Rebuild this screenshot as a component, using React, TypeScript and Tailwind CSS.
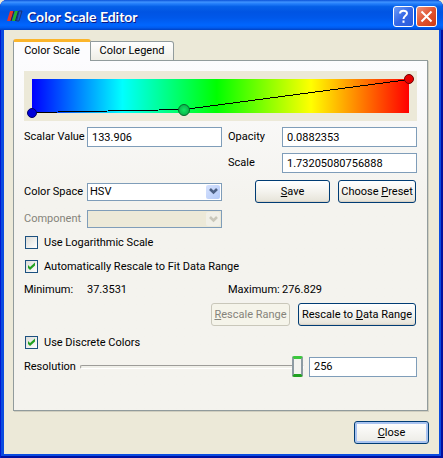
import { useState } from "react";
import type { ReactNode } from "react";

const textBox =
  "h-5 w-full min-w-0 border border-[#7f9db9] bg-white pl-[4px] pr-1 outline-none";
const pushButton =
  "h-[23px] rounded-[3px] border border-[#003c74] bg-linear-to-b from-white via-[#f4f3ee] to-[#e6e3d8] shadow-[inset_0_-1px_1px_#d6d0c5] disabled:border-[#c9c7ba] disabled:bg-none disabled:bg-[#f5f4ea] disabled:text-[#85837a] disabled:shadow-none";

function Chevron({ color }: { color: string }) {
  return (
    <svg width="9" height="7" viewBox="0 0 9 7" fill="none">
      <path d="M1 1 L4.5 4.5 L8 1" stroke={color} strokeWidth="2.6" />
    </svg>
  );
}

function Check({ id, checked, onChange, children }: {
  id: string;
  checked: boolean;
  onChange: (value: boolean) => void;
  children: ReactNode;
}) {
  return (
    <div className="flex h-6 items-center gap-1.5 pl-px">
      <span className="relative flex">
        <input
          id={id}
          type="checkbox"
          checked={checked}
          onChange={(e) => onChange(e.target.checked)}
          className="size-[13px] appearance-none border border-[#1c5180] bg-linear-to-br from-[#dcdcd7] to-white"
        />
        {checked && (
          <svg className="pointer-events-none absolute inset-0" width="13" height="13" viewBox="0 0 13 13">
            <path d="M3 5 L5 7 L10 2.5 V5.5 L5 10 L3 8 Z" fill="#21a121" />
          </svg>
        )}
      </span>
      <label htmlFor={id} className="pt-px">{children}</label>
    </div>
  );
}

function TitleBar() {
  return (
    <header className="flex h-[30px] items-center rounded-t-[7px] bg-[linear-gradient(to_bottom,#0a52d8_0%,#3f93ff_7%,#2580fb_12%,#0560e8_22%,#0054e3_40%,#0058ea_60%,#0066ff_84%,#005cf0_92%,#0042c4_100%)] pl-[7px] pr-1.5">
      <svg className="mt-0.5" width="16" height="12" viewBox="0 0 16 12">
        <path d="M3 1 H6.5 L3.5 11 H0 Z" fill="#e8352c" />
        <path d="M6.5 1 H7.5 L4.5 11 H3.5 Z" fill="#3a1530" />
        <path d="M8 1 H11 L8 11 H5 Z" fill="#27b327" />
        <path d="M11 1 H12 L9 11 H8 Z" fill="#12304a" />
        <path d="M12 1 H15 L12 11 H9.5 Z" fill="#1f55c8" stroke="#1a2f66" strokeWidth="0.8" />
      </svg>
      <h1 className="ml-1 mt-1 flex-1 font-['Lato',sans-serif] text-[14px] leading-5 font-bold text-white [text-shadow:1px_1px_#0a1883]">
        Color Scale Editor
      </h1>
      <div className="mt-[3px] flex gap-0.5">
        <button type="button" aria-label="Help" className="flex size-[21px] items-center justify-center rounded-[3px] border border-white bg-linear-to-br from-[#6f9bf5] via-[#3567e6] to-[#2a5cdb]">
          <svg width="11" height="15" viewBox="0 0 11 15" fill="none" stroke="white" strokeWidth="2">
            <path d="M2 4.5 C2 0.8 9 0.8 9 4.3 C9 7 5.5 6.5 5.5 10" />
            <path d="M5.5 11.5 V13.8" />
          </svg>
        </button>
        <button type="button" aria-label="Close window" className="flex size-[21px] items-center justify-center rounded-[3px] border border-white bg-linear-to-br from-[#ee9078] via-[#e0532f] to-[#cf3a10]">
          <svg width="13" height="13" viewBox="0 0 13 13" stroke="white" strokeWidth="2">
            <path d="M1.5 1.5 L11.5 11.5 M11.5 1.5 L1.5 11.5" />
          </svg>
        </button>
      </div>
    </header>
  );
}

function TransferFunction() {
  return (
    <svg className="block h-auto w-full bg-[#ece9d8]" viewBox="0 0 393 50">
      <defs>
        <linearGradient id="hue">
          <stop offset="0" stopColor="#0000ff" />
          <stop offset="0.24" stopColor="#00ffff" />
          <stop offset="0.49" stopColor="#00ff00" />
          <stop offset="0.74" stopColor="#ffff00" />
          <stop offset="1" stopColor="#ff0000" />
        </linearGradient>
        <radialGradient id="node">
          <stop offset="0" stopColor="#10e860" />
          <stop offset="1" stopColor="#0bb04c" />
        </radialGradient>
      </defs>
      <rect x="8" y="8" width="377" height="34" fill="url(#hue)" />
      <polyline points="8.5,41.5 160,38.5 385,8.5" fill="none" stroke="black" shapeRendering="crispEdges" />
      <circle cx="8" cy="42" r="4.5" fill="#0000d8" stroke="#000068" />
      <circle cx="160" cy="39" r="5.5" fill="url(#node)" stroke="#066b2c" />
      <circle cx="385" cy="8" r="4.5" fill="#e60000" stroke="#700000" />
    </svg>
  );
}

export default function App() {
  const [logScale, setLogScale] = useState(false);
  const [autoRescale, setAutoRescale] = useState(true);
  const [discrete, setDiscrete] = useState(true);
  const [resolution, setResolution] = useState("256");

  return (
    <div className="bg-[#ece9d8]">
      <div className="flex min-h-screen flex-col rounded-t-[7px] bg-[#0a4be0] font-['Roboto',sans-serif] text-[11px] leading-[14px] text-black shadow-[inset_1px_0_#0019cf,inset_-2px_0_#0010a0,inset_0_-2px_#0010a0]">
        <TitleBar />
        <main className="mx-1 mb-1 flex flex-1 flex-col bg-[#ece9d8] pt-[9px] pr-[11px] pb-[10px] pl-[9px]">
          <div role="tablist" className="relative z-10 -mb-px flex items-end">
            <button type="button" role="tab" aria-selected="true" className="h-[22px] w-[78px] rounded-t-[3px] border-x border-t-[3px] border-x-[#919b9c] border-t-[#fbb52c] bg-[#fcfcfe] pb-0.5">
              Color Scale
            </button>
            <button type="button" role="tab" aria-selected="false" className="h-5 w-[83px] rounded-tr-[3px] border-y border-r border-[#919b9c] bg-linear-to-b from-white to-[#efeee6]">
              Color Legend
            </button>
          </div>
          <section className="border border-[#919b9c] bg-linear-to-b from-[#fcfcfe] to-[#f4f3ee] to-40% px-[10px] pt-[10px] pb-[33px] shadow-[1px_1px_#d0cebf]">
            <TransferFunction />

            <div className="mt-1.5 grid grid-cols-[63px_1fr_60px_1fr] items-center gap-y-1.5">
              <label htmlFor="scalar">Scalar Value</label>
              <input id="scalar" defaultValue="133.906" className={textBox} />
              <label htmlFor="opacity" className="pl-1.5">Opacity</label>
              <input id="opacity" defaultValue="0.0882353" className={textBox} />
              <label htmlFor="scale" className="col-start-3 pl-1.5">Scale</label>
              <input id="scale" defaultValue="1.73205080756888" className={textBox} />
            </div>

            <div className="mt-[7px] grid grid-cols-[63px_1fr_60px_1fr] items-center gap-y-[7px]">
              <label htmlFor="space">Color Space</label>
              <span className="relative flex border border-[#7f9db9]">
                <select id="space" defaultValue="HSV" className="h-4 w-full appearance-none bg-white pl-0.5 leading-4">
                  <option>HSV</option>
                  <option>RGB</option>
                </select>
                <span className="pointer-events-none absolute inset-y-px right-px flex w-[14px] items-center justify-center rounded-[2px] bg-linear-to-br from-[#d6e2fd] to-[#b3c9f8]">
                  <Chevron color="#4d6185" />
                </span>
              </span>
              <div className="col-span-2 flex justify-end gap-2 pr-px">
                <button type="button" className={`${pushButton} w-[75px]`}><u>S</u>ave</button>
                <button type="button" className={`${pushButton} w-[78px]`}>Choose <u>P</u>reset</button>
              </div>

              <label htmlFor="component" className="text-[#85837a]">Component</label>
              <span className="relative flex border border-[#7f9db9]">
                <select id="component" disabled className="h-4 w-full appearance-none bg-[#ece9d8]" />
                <span className="pointer-events-none absolute inset-y-px right-px flex w-[14px] items-center justify-center rounded-[2px] bg-[#f1f0e8]">
                  <Chevron color="#c9c7ba" />
                </span>
              </span>
            </div>

            <div className="mt-0.5">
              <Check id="log" checked={logScale} onChange={setLogScale}>Use Logarithmic Scale</Check>
              <Check id="auto" checked={autoRescale} onChange={setAutoRescale}>
                Automatically Rescale to Fit Data Range
              </Check>
            </div>

            <div className="mt-[5px] grid grid-cols-[63px_1fr_60px_1fr]">
              <span>Minimum:</span>
              <span>37.3531</span>
              <span className="pl-1.5">Maximum:</span>
              <span>276.829</span>
            </div>

            <div className="mt-1.5 flex justify-end gap-2 pr-px">
              <button type="button" disabled className={`${pushButton} w-[79px]`}><u>R</u>escale Range</button>
              <button type="button" className={`${pushButton} w-[118px]`}>Rescale to <u>D</u>ata Range</button>
            </div>

            <div className="mt-1">
              <Check id="discrete" checked={discrete} onChange={setDiscrete}>Use Discrete Colors</Check>
            </div>

            <div className="mt-0.5 flex items-center">
              <label htmlFor="resolution" className="w-14">Resolution</label>
              <input
                id="resolution"
                type="range"
                min="2"
                max="256"
                value={resolution}
                onChange={(e) => setResolution(e.target.value)}
                className="mr-[5px] h-[21px] min-w-0 flex-1 appearance-none bg-transparent [&::-webkit-slider-runnable-track]:h-1 [&::-webkit-slider-runnable-track]:rounded-[2px] [&::-webkit-slider-runnable-track]:border [&::-webkit-slider-runnable-track]:border-t-[#9d9c99] [&::-webkit-slider-runnable-track]:border-r-white [&::-webkit-slider-runnable-track]:border-b-white [&::-webkit-slider-runnable-track]:border-l-[#9d9c99] [&::-webkit-slider-runnable-track]:bg-[#f0f0ea] [&::-webkit-slider-thumb]:-mt-[10px] [&::-webkit-slider-thumb]:h-[21px] [&::-webkit-slider-thumb]:w-[11px] [&::-webkit-slider-thumb]:appearance-none [&::-webkit-slider-thumb]:rounded-[2px] [&::-webkit-slider-thumb]:border-x-2 [&::-webkit-slider-thumb]:border-y-[3px] [&::-webkit-slider-thumb]:border-x-[#8d9ba3] [&::-webkit-slider-thumb]:border-t-[#3cc83c] [&::-webkit-slider-thumb]:border-b-[#21a121] [&::-webkit-slider-thumb]:bg-[#f3f3ef]"
              />
              <input
                aria-label="Resolution value"
                value={resolution}
                onChange={(e) => setResolution(e.target.value)}
                className="h-5 w-[108px] border border-[#7f9db9] bg-white pl-[4px] outline-none"
              />
            </div>
          </section>
          <footer className="mt-auto flex justify-end">
            <button type="button" className="-mr-px h-[23px] w-[75px] rounded-[3px] border border-[#003c74] bg-linear-to-b from-white to-[#ecebe5] shadow-[inset_0_0_0_2px_#a9c3f0]">
              <u>C</u>lose
            </button>
          </footer>
        </main>
      </div>
    </div>
  );
}
